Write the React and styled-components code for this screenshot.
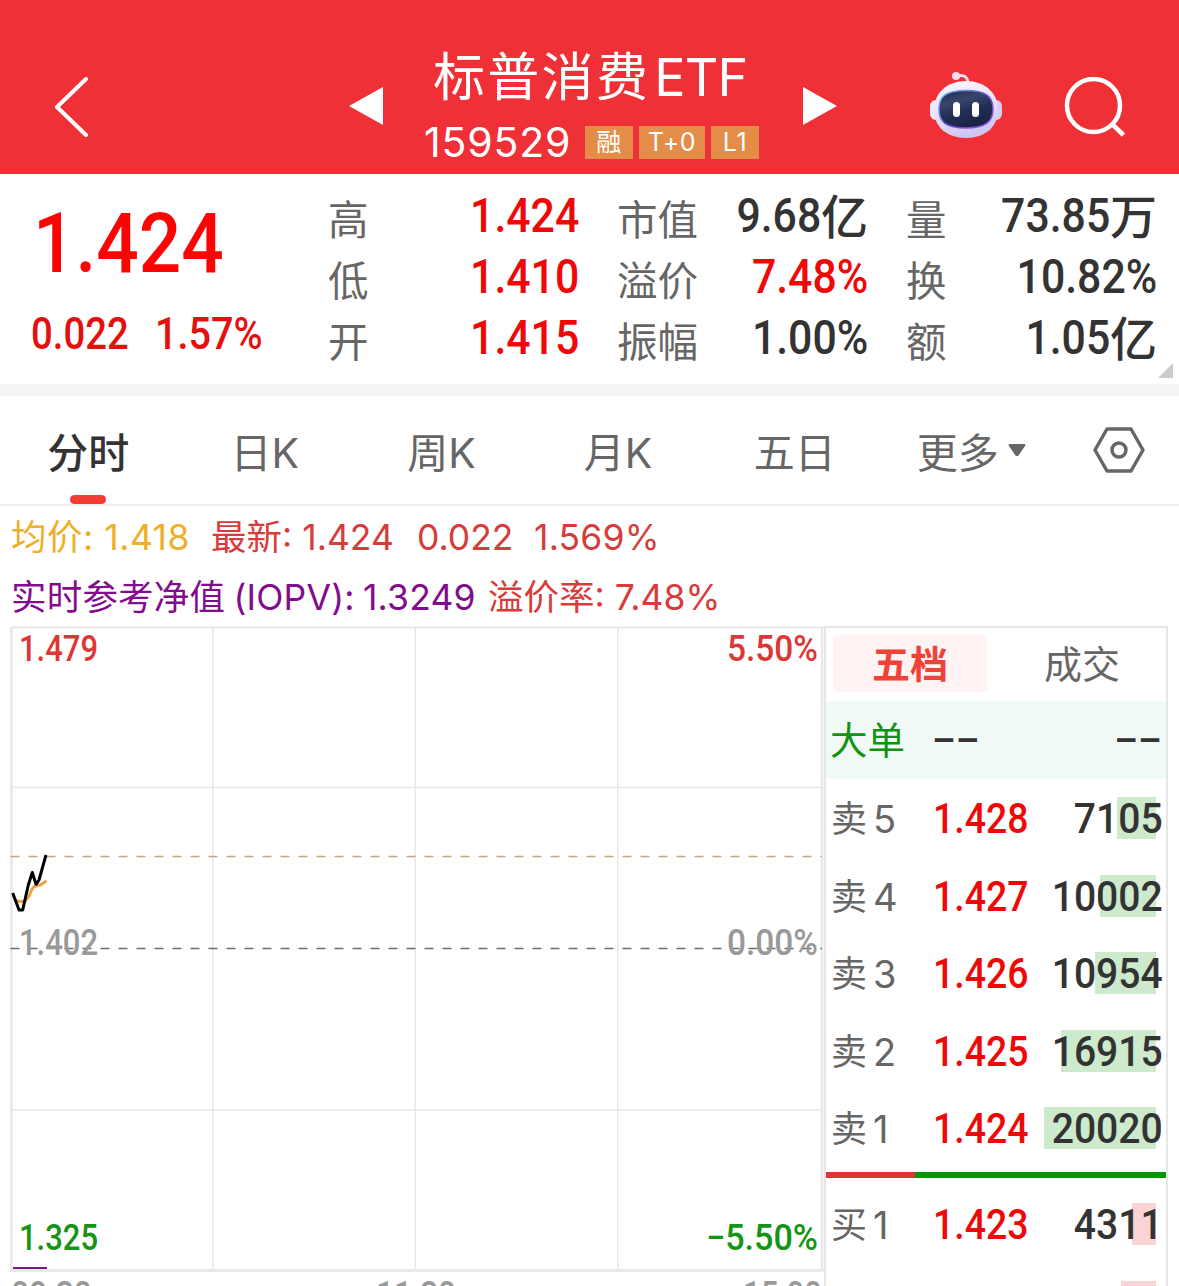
import React from "react";
import styled, { createGlobalStyle } from "styled-components";

const stats = [
  { label: "高", value: "1.424", up: true },
  { label: "市值", value: "9.68", unit: "亿" },
  { label: "量", value: "73.85", unit: "万" },
  { label: "低", value: "1.410", up: true },
  { label: "溢价", value: "7.48%", up: true },
  { label: "换", value: "10.82%" },
  { label: "开", value: "1.415", up: true },
  { label: "振幅", value: "1.00%" },
  { label: "额", value: "1.05", unit: "亿" },
];

const tabs = ["分时", "日K", "周K", "月K", "五日", "更多"];

const sells = [
  { side: "卖", level: 5, price: "1.428", volume: "7105", bar: 39 },
  { side: "卖", level: 4, price: "1.427", volume: "10002", bar: 56 },
  { side: "卖", level: 3, price: "1.426", volume: "10954", bar: 61 },
  { side: "卖", level: 2, price: "1.425", volume: "16915", bar: 95 },
  { side: "卖", level: 1, price: "1.424", volume: "20020", bar: 112 },
];

const buys = [
  { side: "买", level: 1, price: "1.423", volume: "4311", bar: 24 },
  { side: "买", level: 2, price: "1.422", volume: "6300", bar: 35 },
];

const Header = () => (
  <TopBar>
    <BackIcon viewBox="0 0 36 60">
      <path d="M33 2 4 30l29 28" />
    </BackIcon>
    <Triangle viewBox="0 0 36 38">
      <path d="M1 19 35 0v38z" />
    </Triangle>
    <TitleBlock>
      <Title>
        标普消费<TitleLatin>ETF</TitleLatin>
      </Title>
      <CodeRow>
        <Code>159529</Code>
        <Badge $width={48}>融</Badge>
        <Badge $width={66}>T+0</Badge>
        <Badge $width={48}>L1</Badge>
      </CodeRow>
    </TitleBlock>
    <Triangle viewBox="0 0 36 38">
      <path d="M0 0v38l34-19z" />
    </Triangle>
    <Robot />
    <SearchIcon viewBox="0 0 64 62">
      <circle cx="29.500" cy="28.500" r="26.500" />
      <path d="m48 47 11.500 11" />
    </SearchIcon>
  </TopBar>
);

const Robot = () => (
  <RobotIcon viewBox="0 0 74 68">
    <defs>
      <linearGradient id="shell" x1="0" y1="0" x2="0.3" y2="1">
        <stop offset="0" stopColor="#fffaff" />
        <stop offset="0.6" stopColor="#e6dff8" />
        <stop offset="1" stopColor="#cfc6f2" />
      </linearGradient>
      <linearGradient id="visor" x1="0" y1="0" x2="0.4" y2="1">
        <stop offset="0" stopColor="#1c2950" />
        <stop offset="0.35" stopColor="#3a456b" />
        <stop offset="0.65" stopColor="#222e56" />
        <stop offset="1" stopColor="#1a2447" />
      </linearGradient>
      <linearGradient id="rim" x1="0" y1="0" x2="1" y2="1">
        <stop offset="0" stopColor="#63c8ef" />
        <stop offset="0.5" stopColor="#6a52d8" />
        <stop offset="1" stopColor="#9c4fe6" />
      </linearGradient>
    </defs>
    <path
      d="M28 5c7-2 11 1 11 8"
      fill="none"
      stroke="#eedcf2"
      strokeWidth="3"
      strokeLinecap="round"
    />
    <circle cx="27" cy="5" r="4" fill="#f3dcec" />
    <rect x="1" y="29" width="12" height="20" rx="6" fill="#eee8fb" />
    <rect x="61" y="29" width="12" height="20" rx="6" fill="#d6cdf3" />
    <path
      d="M37 10c19 0 32 12 32 29S56 67 37 67 5 56 5 39s13-29 32-29z"
      fill="url(#shell)"
    />
    <path
      d="M37 19.500c20 0 27 6 27 18.500s-7 19-27 19-27-6-27-19 7-18.500 27-18.500z"
      fill="url(#visor)"
      stroke="url(#rim)"
      strokeWidth="1.500"
    />
    <rect x="24" y="31" width="7" height="15" rx="3.500" fill="#fff" />
    <rect x="43" y="31" width="7" height="15" rx="3.500" fill="#fff" />
  </RobotIcon>
);

const Quote = () => (
  <QuotePanel>
    <LastPrice>
      <BigPrice>
        <Num $origin="left" $scale={0.89}>
          1.424
        </Num>
      </BigPrice>
      <Change>
        <ChangeCell $width={124}>
          <Num $origin="left" $scale={0.88}>
            0.022
          </Num>
        </ChangeCell>
        <ChangeCell>
          <Num $origin="left" $scale={0.91}>
            1.57%
          </Num>
        </ChangeCell>
      </Change>
    </LastPrice>
    <StatGrid>
      {stats.map(({ label, value, unit, up }) => (
        <Stat key={label}>
          <StatLabel>{label}</StatLabel>
          <StatValue $up={up}>
            <Num>{value}</Num>
            {unit && <Unit>{unit}</Unit>}
          </StatValue>
        </Stat>
      ))}
    </StatGrid>
    <Corner viewBox="0 0 15 15">
      <path d="M15 0v15H0z" />
    </Corner>
  </QuotePanel>
);

const TabBar = () => (
  <TabRow>
    {tabs.map((tab, i) => (
      <Tab key={tab} $active={i === 0}>
        {tab}
        {tab === "更多" && (
          <Caret viewBox="0 0 18 13">
            <path d="M2 0h14q2.500 0 1 2L10.500 11.500q-1.500 1.500-3 0L1 2q-1.500-2 1-2z" />
          </Caret>
        )}
      </Tab>
    ))}
    <Settings>
      <HexIcon viewBox="0 0 52 46">
        <path d="M14 2h24l12 21-12 21H14L2 23z" />
        <circle cx="26" cy="23" r="7" />
      </HexIcon>
    </Settings>
  </TabRow>
);

const Chart = () => (
  <ChartSvg viewBox="0 0 824 660">
    <g stroke="#e8e8e8" strokeWidth="1.500" fill="none">
      <path d="M11 161.500H822M11 484H822M212.800 2V644M415.300 2V644M617.800 2V644" />
      <path d="M10 1.500H824" strokeWidth="2" />
      <path d="M11.500 1V645M822 1V645" strokeWidth="2.500" />
      <path d="M10 644.500H824" strokeWidth="3" />
    </g>
    <g strokeDasharray="9 9" strokeWidth="1.500">
      <path d="M10.500 230.500H822" stroke="#c9a47a" />
      <path d="M10.500 322.500H822" stroke="#6b6b6b" />
    </g>
    <g fill="none" strokeWidth="3" strokeLinejoin="round">
      <path
        d="M15 274.500Q22 276 25 275 27 273 28.700 270.700L32.300 262.700Q34 260 36 260L40.700 258.700 46.500 255"
        stroke="#eda13c"
      />
      <path
        d="M12.700 267 19 284h3.700L28.300 259 32.300 246.500 36 258.300 39 254 46 229"
        stroke="#000"
      />
      <path d="M13 642H47" stroke="#7b1c82" strokeWidth="2" />
    </g>
    <ChartText x="19" y="35" textLength="79" fill="#dd3636">
      1.479
    </ChartText>
    <ChartText x="727" y="35" textLength="91" fill="#dd3636">
      5.50%
    </ChartText>
    <ChartText x="19" y="329" textLength="79" fill="#999">
      1.402
    </ChartText>
    <ChartText x="727" y="329" textLength="91" fill="#999">
      0.00%
    </ChartText>
    <ChartText x="19" y="623.500" textLength="79" fill="#159415">
      1.325
    </ChartText>
    <ChartText x="706" y="623.500" textLength="112" fill="#159415">
      −5.50%
    </ChartText>
    <ChartText x="11" y="681" textLength="81" fill="#999">
      09:30
    </ChartText>
    <ChartText x="376" y="681" textLength="80" fill="#999">
      11:30
    </ChartText>
    <ChartText x="743" y="681" textLength="79" fill="#999">
      15:00
    </ChartText>
  </ChartSvg>
);

const BookRow = ({ side, level, price, volume, bar }) => (
  <Order>
    <OrderSide>
      {side}
      <Level>{level}</Level>
    </OrderSide>
    <OrderPrice>
      <Num $origin="left" $scale={0.88}>
        {price}
      </Num>
    </OrderPrice>
    <OrderVolume>
      <VolumeBar $buy={side === "买"} style={{ width: bar }} />
      <Num $scale={0.92}>{volume}</Num>
    </OrderVolume>
  </Order>
);

const OrderBook = () => (
  <Book>
    <BookTabs>
      <BookTab $active>五档</BookTab>
      <BookTab>成交</BookTab>
    </BookTabs>
    <BigOrder>
      <BigOrderLabel>大单</BigOrderLabel>
      <Dashes $origin="left">––</Dashes>
      <Dashes>––</Dashes>
    </BigOrder>
    {sells.map((row) => (
      <BookRow key={row.level} {...row} />
    ))}
    <Ratio />
    {buys.map((row) => (
      <BookRow key={row.level} {...row} />
    ))}
  </Book>
);

export default function App() {
  return (
    <Page>
      <GlobalStyle />
      <Header />
      <Quote />
      <TabBar />
      <InfoLine>
        <Info $color="#f0ae29" $width={200} $spacing={0.5}>
          均价: 1.418
        </Info>
        <Info $color="#d73c3a" $width={206}>
          最新: 1.424
        </Info>
        <Info $color="#d73c3a" $width={117}>
          0.022
        </Info>
        <Info $color="#d73c3a" $spacing={0.2}>
          1.569%
        </Info>
      </InfoLine>
      <InfoLine>
        <Iopv $color="#830b8d" $width={477} $spacing={0.2}>
          实时参考净值 (IOPV): 1.3249
        </Iopv>
        <Info $color="#d73c3a">溢价率: 7.48%</Info>
      </InfoLine>
      <Market>
        <Chart />
        <OrderBook />
      </Market>
    </Page>
  );
}

const GlobalStyle = createGlobalStyle`
  * {
    box-sizing: border-box;
  }
  body {
    margin: 0;
    overflow: hidden;
  }
`;

const Page = styled.div`
  width: 1179px;
  height: 1286px;
  overflow: hidden;
  background: #fff;
  color: #333;
  font-family: Inter, "Noto Sans CJK SC", sans-serif;
`;

// Condensed figures, narrower than the regular Roboto ones
const Num = styled.span`
  display: inline-block;
  font-family: Roboto, "Noto Sans CJK SC", sans-serif;
  font-weight: 500;
  font-kerning: none;
  white-space: nowrap;
  transform: scaleX(${(props) => props.$scale || 0.9});
  transform-origin: ${(props) => props.$origin || "right"} center;
`;

const TopBar = styled.header`
  display: grid;
  grid-template-columns: 295px 36px 419px 126px 135px 64px;
  height: 174px;
  padding-left: 53px;
  align-items: start;
  background: #ef3037;
  color: #fff;
`;

const BackIcon = styled.svg`
  width: 36px;
  height: 60px;
  margin-top: 77px;
  fill: none;
  stroke: #fff;
  stroke-width: 4;
  stroke-linecap: round;
  stroke-linejoin: round;
`;

const Triangle = styled.svg`
  width: 36px;
  height: 38px;
  margin-top: 87px;
  fill: #fff;
`;

const RobotIcon = styled.svg`
  width: 74px;
  height: 68px;
  margin-top: 71px;
`;

const SearchIcon = styled.svg`
  width: 64px;
  height: 62px;
  margin-top: 77px;
  fill: none;
  stroke: #fff;
  stroke-width: 4.5;
`;

const TitleBlock = styled.div`
  display: flex;
  flex-direction: column;
  padding: 43px 0 0 49px;
`;

const Title = styled.div`
  display: flex;
  height: 68px;
  line-height: 70px;
  font-size: 52px;
  letter-spacing: 2.3px;
  white-space: nowrap;
`;

const TitleLatin = styled.span`
  margin-left: 4px;
  letter-spacing: -0.8px;
`;

const CodeRow = styled.div`
  display: flex;
  gap: 6px;
  align-items: center;
  height: 62px;
  margin-left: -9px;
`;

const Code = styled.span`
  width: 155px;
  font-size: 41px;
  line-height: 60px;
  letter-spacing: 0.8px;
`;

const Badge = styled.span`
  width: ${(props) => props.$width}px;
  height: 33px;
  background: #e38d48;
  font-size: 25px;
  line-height: 33px;
  letter-spacing: 0.6px;
  text-align: center;
`;

const QuotePanel = styled.section`
  position: relative;
  display: flex;
  height: 222px;
  border-bottom: 12px solid #f4f4f4;
`;

const LastPrice = styled.div`
  width: 328px;
  padding: 17px 0 0 31px;
  color: #fd0404;
`;

const BigPrice = styled.div`
  height: 102px;
  padding-left: 2px;
  line-height: 102px;
  font-size: 84px;
`;

const Change = styled.div`
  display: flex;
  height: 80px;
  line-height: 80px;
  font-size: 43.5px;
  color: #e60f0f;
`;

const ChangeCell = styled.span`
  width: ${(props) => (props.$width ? `${props.$width}px` : "auto")};
`;

const StatGrid = styled.div`
  display: grid;
  grid-template-columns: 251px 251px 251px;
  grid-auto-rows: 61px;
  column-gap: 38px;
  padding-top: 12px;
`;

const Stat = styled.div`
  display: flex;
  justify-content: space-between;
  line-height: 61px;
`;

const StatLabel = styled.span`
  padding-top: 4px;
  font-size: 40.5px;
  color: #666;
`;

const StatValue = styled.span`
  display: flex;
  font-size: 47.5px;
  color: ${(props) => (props.$up ? "#f00808" : "#333")};
`;

const Unit = styled.span`
  font-size: 47px;
  font-weight: 500;
`;

const Corner = styled.svg`
  position: absolute;
  right: 6px;
  bottom: 6px;
  width: 15px;
  height: 15px;
  fill: #ccc;
`;

const TabRow = styled.nav`
  display: flex;
  height: 110px;
  border-bottom: 2px solid #ececec;
`;

const Tab = styled.div`
  position: relative;
  display: flex;
  align-items: center;
  justify-content: center;
  width: 176.6px;
  height: 107px;
  font-size: 41px;
  font-weight: ${(props) => (props.$active ? 500 : 400)};
  color: ${(props) => (props.$active ? "#333" : "#666")};

  &::after {
    content: "";
    display: ${(props) => (props.$active ? "block" : "none")};
    position: absolute;
    bottom: -1px;
    width: 36px;
    height: 9px;
    border-radius: 5px;
    background: #f43b31;
  }
`;

const Caret = styled.svg`
  width: 18px;
  height: 13px;
  margin: 1px 0 0 9px;
  fill: #666;
`;

const Settings = styled.div`
  display: flex;
  flex: 1;
  align-items: center;
  justify-content: center;
`;

const HexIcon = styled.svg`
  width: 52px;
  height: 46px;
  fill: none;
  stroke: #666;
  stroke-width: 3.5;
  stroke-linejoin: round;
`;

const InfoLine = styled.div`
  display: flex;
  height: 60px;
  padding: 2px 0 0 11px;
  line-height: 60px;
  font-size: 35.5px;
`;

const Info = styled.span`
  width: ${(props) => (props.$width ? `${props.$width}px` : "auto")};
  color: ${(props) => props.$color};
  letter-spacing: ${(props) => props.$spacing || 0}px;
  white-space: nowrap;
`;

const Iopv = styled(Info)`
  word-spacing: -2px;
`;

const Market = styled.div`
  display: flex;
  height: 660px;
`;

const ChartSvg = styled.svg`
  width: 824px;
  height: 660px;
`;

const ChartText = styled.text.attrs({ lengthAdjust: "spacingAndGlyphs" })`
  font-family: Roboto, sans-serif;
  font-size: 36px;
  font-weight: 500;
`;

const Book = styled.aside`
  width: 344px;
  height: 680px;
  border: 2px solid #e6e6e6;
`;

const BookTabs = styled.div`
  display: flex;
  gap: 18px;
  height: 73px;
  padding: 7px 7px 9px;
`;

const BookTab = styled.div`
  width: 154px;
  height: 57px;
  border-radius: 5px;
  background: ${(props) => (props.$active ? "#fff3f3" : "transparent")};
  color: ${(props) => (props.$active ? "#ef4239" : "#666")};
  font-size: 38px;
  font-weight: ${(props) => (props.$active ? 700 : 400)};
  line-height: 58px;
  text-align: center;
`;

const BigOrder = styled.div`
  display: flex;
  height: 78px;
  padding: 0 4px;
  background: #f1f9f6;
  line-height: 80px;
`;

const BigOrderLabel = styled.span`
  width: 102px;
  font-size: 37.5px;
  color: #109310;
`;

const Dashes = styled(Num)`
  font-size: 41px;
  line-height: 78px;

  &:last-child {
    margin-left: auto;
  }
`;

const Order = styled.div`
  display: flex;
  height: 77.6px;
  padding: 0 3px 0 5px;
  line-height: 77.6px;
  font-size: 42.5px;
`;

const OrderSide = styled.span`
  display: flex;
  width: 102px;
  padding-top: 2px;
  font-size: 36px;
  color: #666;
`;

const Level = styled.span`
  margin-left: 6px;
  font-size: 38px;
`;

const OrderPrice = styled.span`
  color: #f00808;
`;

const OrderVolume = styled.span`
  position: relative;
  flex: 1;
  text-align: right;
`;

const VolumeBar = styled.i`
  position: absolute;
  top: 18px;
  right: 7px;
  height: 42px;
  background: ${(props) => (props.$buy ? "#fad3d5" : "#cdeacd")};
`;

const Ratio = styled.div`
  height: 6px;
  margin: 5px 0 7px;
  background: linear-gradient(to right, #df3434 89px, #069606 89px);
`;
